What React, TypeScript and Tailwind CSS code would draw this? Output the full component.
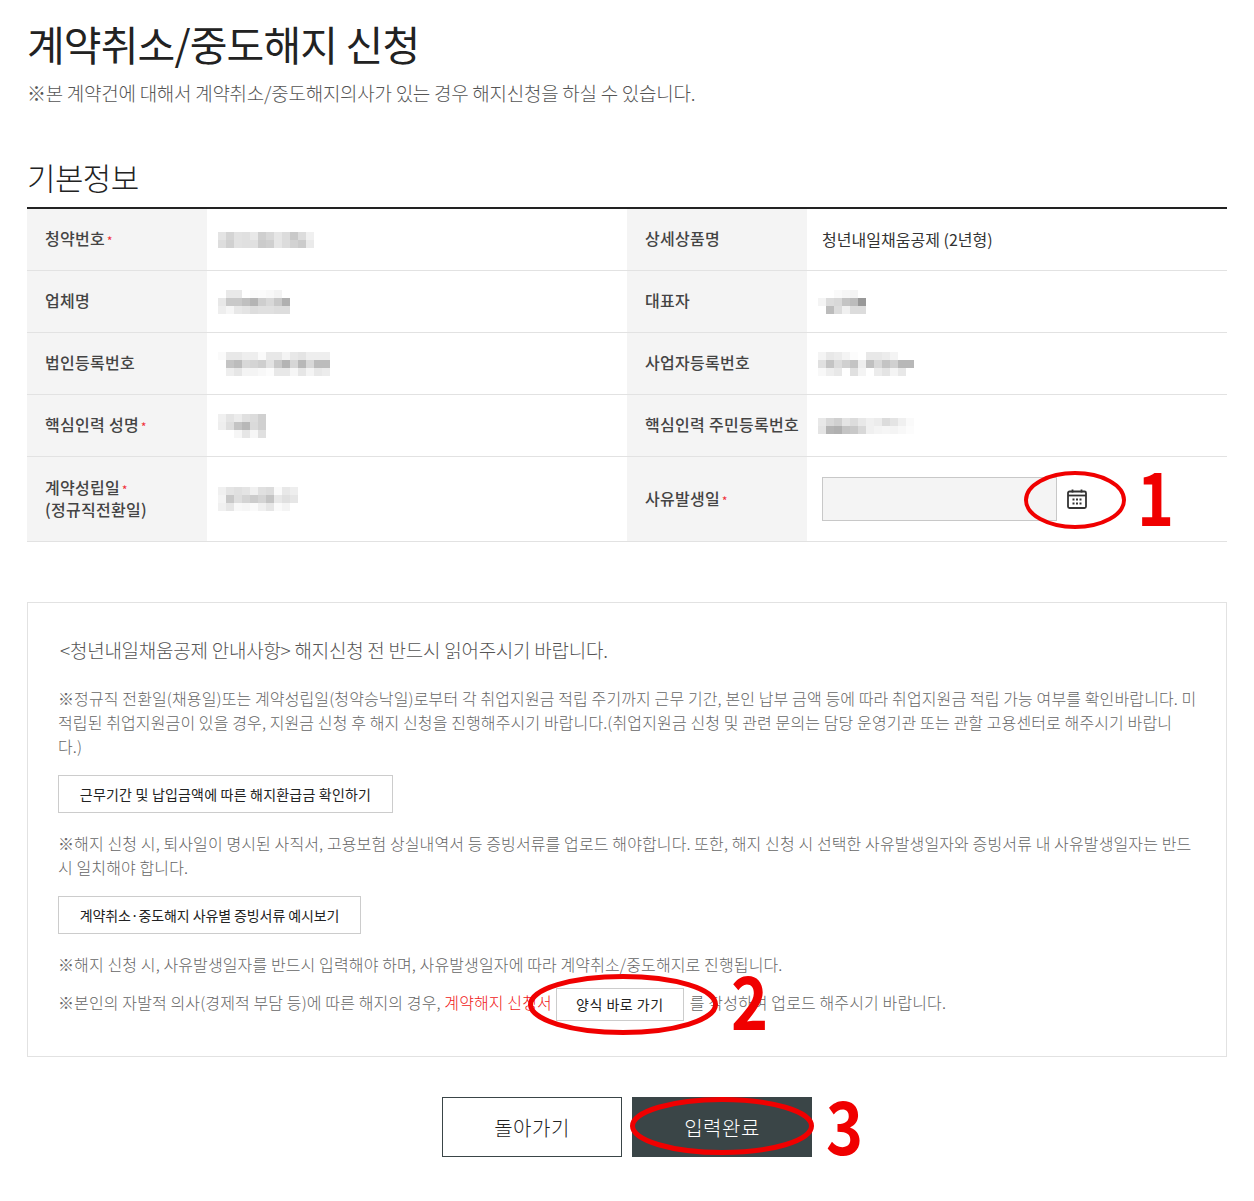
const FONT = "font-['Noto_Sans_CJK_KR','Noto_Sans',sans-serif]";

type Row = { label: React.ReactNode; value: React.ReactNode };

function Star() {
  return <span className="ml-0.5 text-[11px] leading-none text-[#f0303a]">*</span>;
}

// blurred-out values in the screenshot, one two-digit gray per cell
function Mosaic({ rows }: { rows: string[] }) {
  return (
    <div className="flex flex-col">
      {rows.map((row, i) => (
        <div key={i} className="flex">
          {row.split(" ").map((g, j) => (
            <div key={j} className="h-2 w-2" style={{ background: `#${g}${g}${g}` }} />
          ))}
        </div>
      ))}
    </div>
  );
}

function CalendarIcon() {
  return (
    <svg width="22" height="22" viewBox="0 0 22 22" fill="none">
      <rect x="2" y="3.5" width="18" height="16.5" rx="1.5" stroke="#333" strokeWidth="1.8" />
      <path d="M2 7.5h18" stroke="#333" strokeWidth="1.8" />
      <path d="M6.5 1.5v3M15.5 1.5v3" stroke="#333" strokeWidth="1.8" />
      <path
        d="M6.5 10.5h2v2h-2zM10 10.5h2v2h-2zM13.5 10.5h2v2h-2zM6.5 14.5h2v2h-2zM10 14.5h2v2h-2zM13.5 14.5h2v2h-2z"
        fill="#333"
      />
    </svg>
  );
}

function Ellipse({ className, width, height, sw }: { className: string; width: number; height: number; sw: number }) {
  return (
    <svg className={`pointer-events-none absolute ${className}`} width={width} height={height} fill="none">
      <ellipse cx={width / 2} cy={height / 2} rx={width / 2 - sw / 2} ry={height / 2 - sw / 2} stroke="#f00000" strokeWidth={sw} />
    </svg>
  );
}

const rows: { left: Row; right: Row; tall?: boolean }[] = [
  {
    left: {
      label: <>청약번호<Star /></>,
      value: <Mosaic rows={["e4 d4 e2 e0 e8 cf d8 e6 dc c9 dc f0", "dd d0 e2 e0 e0 cb cf e6 dc d2 cb ea"]} />,
    },
    right: { label: "상세상품명", value: <span className="mb-[2px] ml-1 text-[16px] tracking-[0.02px] text-[#333]">청년내일채움공제 (2년형)</span> },
  },
  {
    left: {
      label: "업체명",
      value: <Mosaic rows={["ff e9 e9 ff fa fb f8 f3 ff", "e8 c9 c9 c0 b4 ce d8 c8 b0", "ee f6 e8 e4 dd e0 e0 dd dd"]} />,
    },
    right: {
      label: "대표자",
      value: <Mosaic rows={["ff ff fa f6 f4 ff", "f4 dc d8 c4 bc 98", "ff bc dc f0 dc dc"]} />,
    },
  },
  {
    left: {
      label: "법인등록번호",
      value: <Mosaic rows={["fa e8 e8 ee ee fa e8 e8 f4 e8 e4 ee ee ee", "ff c4 bc d8 d4 ce e2 c8 b4 d6 b8 d8 bc bc", "ff ee e6 f4 f4 f8 fc e8 e8 f6 e6 f4 e8 ec"]} />,
    },
    right: {
      label: "사업자등록번호",
      value: <Mosaic rows={["f4 e8 ec f4 fc ff e8 e8 ec f4 ff ff", "e0 c4 dc d0 c4 ee c0 d8 c4 d0 b8 b8", "f8 ee e8 ff e0 f4 ff ec e4 f4 e8 ff"]} />,
    },
  },
  {
    left: {
      label: <>핵심인력 성명<Star /></>,
      value: <Mosaic rows={["f0 e4 ec e0 dc d0", "ee de c4 b8 da d0", "ff ff f6 e6 f6 e0"]} />,
    },
    right: {
      label: "핵심인력 주민등록번호",
      value: <Mosaic rows={["e8 d8 d0 e4 dc e8 f0 ec dc e4 f0 fa", "e4 b4 b0 c4 c8 d8 f0 f4 f6 f4 f8 fc"]} />,
    },
  },
  {
    tall: true,
    left: {
      label: <>계약성립일<Star /><br />(정규직전환일)</>,
      value: <Mosaic rows={["f0 e4 e0 e4 f0 e0 dc fa e8 ee", "f4 c8 de d4 cc d4 c4 e8 e0 e6", "f0 e6 f8 f6 fa f0 e6 fa f4 ff"]} />,
    },
    right: {
      label: <>사유발생일<Star /></>,
      value: (
        <div className="ml-1 flex h-11 items-center">
          <div className="h-11 w-[235px] border border-[#c8c8c8] bg-[#f4f4f4]" />
          <div className="flex w-[40px] justify-center">
            <CalendarIcon />
          </div>
        </div>
      ),
    },
  },
];

function Cells({ cell }: { cell: Row }) {
  return (
    <>
      <div className="flex w-[180px] items-center bg-[#f4f4f4] pb-[3px] pl-[18px] text-[16px] leading-[22px] font-medium tracking-[0.3px] whitespace-nowrap text-[#444]">
        <div>{cell.label}</div>
      </div>
      <div className="flex w-[420px] items-center pl-[11px]">{cell.value}</div>
    </>
  );
}

function Notice({ children, className = "" }: { children: React.ReactNode; className?: string }) {
  return (
    <p className={`-translate-y-px text-[16px] leading-6 font-light tracking-[0.12px] whitespace-nowrap text-[#666] ${className}`}>
      {children}
    </p>
  );
}

export default function App() {
  return (
    <div className={`relative h-[1201px] w-[1254px] overflow-hidden bg-white px-[27px] ${FONT}`}>
      <h1 className="pt-[13px] text-[41px] leading-[60px] font-normal tracking-[-0.85px] text-[#222]">
        계약취소/중도해지 신청
      </h1>
      <p className="mt-[5px] text-[19px] leading-[30px] font-light tracking-[-0.27px] text-[#555]">
        ※본 계약건에 대해서 계약취소/중도해지의사가 있는 경우 해지신청을 하실 수 있습니다.
      </p>

      <h2 className="mt-[46px] text-[31px] leading-[46px] font-light tracking-[-0.6px] text-[#222]">기본정보</h2>

      <div className="mt-[7px] border-t-2 border-[#222]">
        {rows.map((row, i) => (
          <div key={i} className={`flex border-b border-[#e2e2e2] ${row.tall ? "h-[85px]" : "h-[62px]"}`}>
            <Cells cell={row.left} />
            <Cells cell={row.right} />
          </div>
        ))}
      </div>

      <div className="mt-[60px] h-[455px] border border-[#e2e2e2] pt-[33px] pl-[30px]">
        <div className="pl-[2px] text-[19px] leading-7 font-light tracking-[-0.25px] text-[#555]">
          &lt;청년내일채움공제 안내사항&gt; 해지신청 전 반드시 읽어주시기 바랍니다.
        </div>

        <Notice className="mt-[23px]">
          ※정규직 전환일(채용일)또는 계약성립일(청약승낙일)로부터 각 취업지원금 적립 주기까지 근무 기간, 본인 납부 금액 등에 따라 취업지원금 적립 가능 여부를 확인바랍니다. 미
          <br />
          적립된 취업지원금이 있을 경우, 지원금 신청 후 해지 신청을 진행해주시기 바랍니다.(취업지원금 신청 및 관련 문의는 담당 운영기관 또는 관할 고용센터로 해주시기 바랍니
          <br />
          다.)
        </Notice>
        <button className="mt-4 block h-[38px] w-[335px] border border-[#ccc] text-[14px] tracking-[0.2px] text-[#222]">
          근무기간 및 납입금액에 따른 해지환급금 확인하기
        </button>

        <Notice className="mt-[19px]">
          ※해지 신청 시, 퇴사일이 명시된 사직서, 고용보험 상실내역서 등 증빙서류를 업로드 해야합니다. 또한, 해지 신청 시 선택한 사유발생일자와 증빙서류 내 사유발생일자는 반드
          <br />
          시 일치해야 합니다.
        </Notice>
        <button className="mt-4 block h-[38px] w-[303px] border border-[#ccc] text-[14px] tracking-[-0.1px] text-[#222]">
          계약취소·중도해지 사유별 증빙서류 예시보기
        </button>

        <Notice className="mt-[19px]">
          ※해지 신청 시, 사유발생일자를 반드시 입력해야 하며, 사유발생일자에 따라 계약취소/중도해지로 진행됩니다.
        </Notice>
        <div className="mt-[11px] flex items-center">
          <Notice className="mb-1">
            ※본인의 자발적 의사(경제적 부담 등)에 따른 해지의 경우, <span className="text-[#f01818]">계약해지 신청서</span>
          </Notice>
          <button className="mr-[6px] ml-[4px] h-[33px] w-[128px] border border-[#ccc] text-[14px] tracking-[0.5px] text-[#222]">
            양식 바로 가기
          </button>
          <Notice className="mb-1">를 작성하여 업로드 해주시기 바랍니다.</Notice>
        </div>
      </div>

      <div className="mt-10 flex justify-center gap-[10px]">
        <button className="h-[60px] w-[180px] border border-[#3a4547] pt-px text-[20px] font-light tracking-[0.5px] text-[#222]">돌아가기</button>
        <button className="h-[60px] w-[180px] bg-[#3a4547] pt-px text-[20px] font-light tracking-[0.5px] text-white">입력완료</button>
      </div>

      {/* red annotations drawn over the screenshot */}
      <Ellipse className="top-[471px] left-[1024px]" width={102} height={58} sw={4} />
      <span className="absolute top-[444px] left-[1137px] origin-left scale-x-85 text-[74px] leading-[100px] font-bold text-[#f00000]">1</span>
      <Ellipse className="top-[974px] left-[528px]" width={190} height={61} sw={5} />
      <span className="absolute top-[948px] left-[731px] origin-left scale-x-85 text-[74px] leading-[100px] font-bold text-[#f00000]">2</span>
      <Ellipse className="top-[1097px] left-[630px]" width={184} height={58} sw={5} />
      <span className="absolute top-[1073px] left-[826px] origin-left scale-x-85 text-[74px] leading-[100px] font-bold text-[#f00000]">3</span>
    </div>
  );
}
